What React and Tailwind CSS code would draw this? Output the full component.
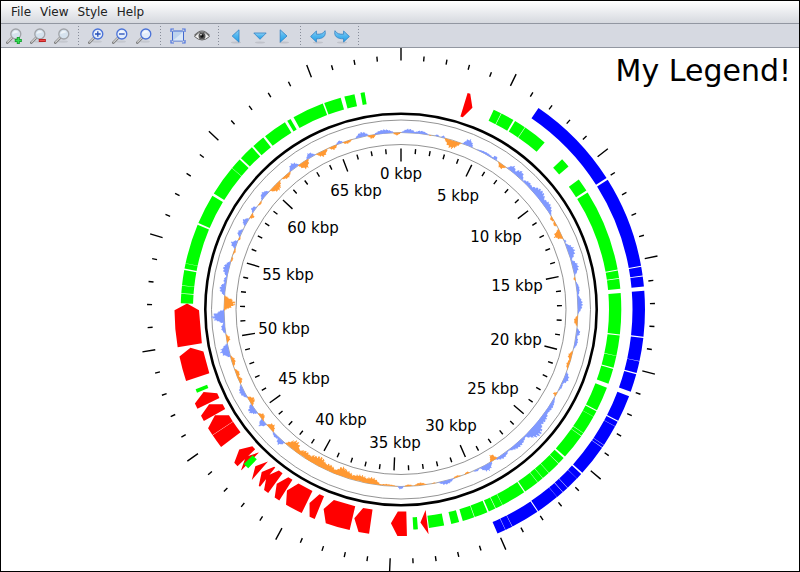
import React from 'react';

const RAD_PER_DEG = Math.PI / 180;
const DEG_PER_KBP = 5.214;

function pt(r, deg) {
  const a = deg * RAD_PER_DEG;
  return `${(r * Math.sin(a)).toFixed(2)} ${(-r * Math.cos(a)).toFixed(2)}`;
}

function band(r0, r1, a0, a1) {
  return `M${pt(r1, a0)}A${r1} ${r1} 0 0 1 ${pt(r1, a1)}L${pt(r0, a1)}A${r0} ${r0} 0 0 0 ${pt(r0, a0)}Z`;
}

const FORWARD = [
  [24.9, 27], [27.15, 30.7], [31.2, 34.2], [34.35, 40.7], [47, 49.5], [53.8, 57.3], [57.9, 79.55], [79.8, 81.8], [82, 84.6],
  [85.7, 96.5], [96.8, 102.1], [102.2, 105.3], [105.65, 109.7], [110.8, 117.2], [117.5, 119.05], [119.1, 124.1], [124.2, 125],
  [125.1, 131.9], [132.4, 134.3], [134.4, 137.8], [137.9, 139.9], [140, 141.6], [141.7, 145.7], [146, 152.5], [152.6, 154.5],
  [154.65, 156.5], [156.9, 160.45], [160.6, 163.7], [164.7, 166.8], [168.7, 172.7], [175.6, 176.8], [223.9, 225.5], [247.8, 248.8],
  [271.6, 274.1], [274.25, 276.2], [276.3, 280.3], [280.7, 282.05], [282.15, 292.6], [293.1, 301.1], [301.8, 309.85], [309.95, 312.9],
  [313.4, 317.4], [317.9, 321.3], [321.9, 328.2], [328.9, 329.9], [330.8, 339.2], [339.6, 344.1], [345.1, 347.8], [349.4, 350.5],
];

const OUTER = [
  [34.3, 57.4], [57.9, 79.7], [79.9, 82], [82.2, 84.6], [85.6, 96.4], [96.7, 102.2], [102.28, 105.1], [105.4, 109.7], [110.8, 117.1],
  [117.4, 118.6], [118.68, 123.7], [123.8, 124.4], [124.5, 132], [132.4, 133.8], [133.86, 136.9], [137, 138.4], [138.5, 140.2],
  [140.26, 145.75], [146, 152.8], [152.9, 154.6], [154.7, 156.7],
];

// base angle, shoulder angle, tip angle
const ARROWS = [
  [17.1, 17.8, 19.5], [173, 173, 174.8], [178.5, 180.9, 182.7], [188.1, 190.8, 192.6], [193.1, 199.4, 201.2], [202.4, 203.8, 205.3],
  [206, 210.5, 212.2], [212.5, 213.9, 215.5], [215.9, 217.2, 218.9], [218.5, 218.9, 220.6], [221.2, 221.2, 222.9], [224.8, 224.9, 226.5],
  [226.2, 227.4, 229.1], [236.35, 238.4, 240.4], [240.5, 242, 243.7], [244, 245.5, 247.3], [251.6, 258, 259.7], [260.4, 269.8, 271.6],
];

// start angle, end angle, peak height; positive values point outwards
const SKEW = [
  [0, 5, 4], [4, 9, 3], [9, 10, -1], [11, 12.5, 2], [13, 14.5, 2], [14.2, 20, -9], [20.3, 24, 7], [25, 32, 2], [31, 32.8, 4],
  [33.4, 36.5, -5], [36.8, 40, 6], [39, 43.5, 7], [43, 48, 4], [46, 54, 8], [51, 58, 6], [58, 60.2, -3], [60, 62, -3],
  [62.8, 66.5, -8], [66.7, 68, 2], [68, 74, 7], [73.5, 79, 6], [79.3, 80.7, -2], [80.8, 86, 3], [85, 91.5, 5], [91.8, 95.5, -4],
  [96, 99, 4], [98, 103, 3], [103.5, 107, -4], [106, 110, -3], [110.5, 115, 5], [114, 117.5, 2], [118, 119.3, -4], [119.5, 127, 4],
  [124, 132, 6], [128, 136, 11], [135, 143, 5], [142.5, 148, 4], [147, 149.7, -7], [149, 153.7, 7], [153.5, 156, 2], [157, 159, -2],
  [160, 163, -2], [162.5, 168, 4], [168.5, 170, -1], [171.5, 176, -3], [176, 179, -2], [179, 181.2, 3], [181, 188, -2],
  [186.5, 193, -7], [189, 198, -7], [194, 204, -8], [197.5, 202.5, -10], [201, 208, -7], [204.5, 212, -10], [207.5, 213, -8],
  [210, 217, -7], [215, 221, -10], [221, 224, 6], [223, 226.5, 3], [226, 229.5, -6], [229.3, 232, 7], [231, 234, -5],
  [234, 238, 7], [237, 240.5, -6], [240, 245, 5], [245, 248, -4], [247, 250.5, -4], [251, 255, -4], [254.3, 259, 9], [259, 262, -4],
  [262, 266, 4], [265.4, 270, 13], [269.7, 274.5, -12], [274.4, 279, 6], [278, 281, 3], [280.5, 286, 6], [285.5, 287.5, -2],
  [288, 290.5, -2], [290, 293, 6], [293, 294.5, -2], [294, 297, 4], [298, 301, 5], [301, 303, -4], [303, 305.5, 4], [306, 308, -2],
  [308, 312, 5], [312, 317, -7], [317.5, 321.5, -4], [321, 325, 6], [324.3, 328.5, -8], [327.7, 331, 5], [331.2, 335.5, -6],
  [335.8, 339, -4], [338.5, 341, 3], [340.5, 344, -3], [345, 349.7, 5], [349, 352, -4], [351, 358, 4], [357.3, 360, -3],
];

function lump([a0, a1, h], index) {
  const steps = Math.max(4, Math.round((a1 - a0) / 0.3));
  let d = `M${pt(177, a0)}`;
  for (let i = 0; i < steps; i += 1) {
    const t = (i + 0.5) / steps;
    const jitter = 0.87 + 0.13 * Math.sin(i * 2.1 + index * 2.3);
    const r = 177 + h * Math.sin(Math.PI * t) * jitter;
    d += `L${pt(r, a0 + ((a1 - a0) * i) / steps)}L${pt(r, a0 + ((a1 - a0) * (i + 1)) / steps)}`;
  }
  return `${d}L${pt(177, a1)}Z`;
}

function arrow([base, shoulder, tip]) {
  const side = shoulder > base + 3 ? `A226.5 226.5 0 0 1 ${pt(226.5, shoulder)}` : `L${pt(226.5, shoulder)}`;
  return `M${pt(202, base)}L${pt(226.5, base)}${side}L${pt(214, tip)}L${pt(202, shoulder)}Z`;
}

const LABELS = [
  ['0 kbp', 0, -131], ['5 kbp', 57, -109], ['10 kbp', 95, -68], ['15 kbp', 116, -19], ['20 kbp', 115, 35], ['25 kbp', 92, 84],
  ['30 kbp', 50, 121], ['35 kbp', -6, 138], ['40 kbp', -60, 115], ['45 kbp', -97, 74], ['50 kbp', -117, 24], ['55 kbp', -113, -30],
  ['60 kbp', -88, -77], ['65 kbp', -45, -114],
];

function GenomeMap() {
  const ticks = Array.from({ length: 69 }, (_, k) => {
    const major = k % 5 === 0;
    const a = k * DEG_PER_KBP;
    return `M${pt(161, a)}L${pt(major ? 148 : 156, a)}M${pt(249, a)}L${pt(major ? 262 : 254, a)}`;
  }).join('');
  return (
    <svg viewBox="1 48 798 523" className="block h-full w-full" role="img" aria-label="Circular genome map">
      <g transform="translate(401 309.5)">
        <circle r="195.7" fill="none" stroke="#000" strokeWidth="2.6" />
        <circle r="189.5" fill="none" stroke="#777" strokeWidth="0.8" />
        <circle r="165" fill="none" stroke="#777" strokeWidth="0.8" />
        <circle r="177" fill="none" stroke="#808080" strokeWidth="0.7" />
        {SKEW.map((s, i) => (
          <path key={i} d={lump(s, i)} fill={s[2] > 0 ? '#8099ff' : '#ff9933'} />
        ))}
        <path d={ticks} stroke="#000" strokeWidth="1.4" />
        <path d={OUTER.map(([a, b]) => band(231.5, 244, a, b)).join('')} fill="#00f" />
        <path d={ARROWS.map(arrow).join('')} fill="#f00" />
        <path d={band(202, 226.5, 232.6, 236.25)} fill="#f00" />
        <path d={FORWARD.map(([a, b]) => band(208, 220.3, a, b)).join('')} fill="#0f0" />
        {LABELS.map(([label, x, y]) => (
          <text key={label} x={x} y={y} textAnchor="middle" className="text-[15px]">{label}</text>
        ))}
      </g>
    </svg>
  );
}

function Lens({ tone = 'blue', sign }) {
  const blue = tone === 'blue';
  return (
    <svg viewBox="0 0 16 16" className="size-4">
      <ellipse cx="9" cy="13.6" rx="5" ry="1.2" fill="#000" opacity="0.08" />
      <path d="M1.3 14.7 6.3 9.7" stroke="#7d7d7d" strokeWidth="2.6" strokeLinecap="round" />
      <path d="M1.6 14.2 6 9.7" stroke="#d8d8d8" strokeWidth="1.1" strokeLinecap="round" />
      <circle cx="9.8" cy="6" r="5" fill={blue ? '#e2ecfa' : '#d5e2ee'} stroke={blue ? '#4a72d8' : '#a0a3a8'} strokeWidth="1.3" />
      <path d="M6.400 6a3.400 3.400 0 0 1 6.200-1.800Z" fill="#fff" opacity="0.6" />
      {blue && sign && <path d={sign === 'plus' ? 'M7 6h5.6M9.8 3.2v5.6' : 'M7 6h5.6'} stroke="#2850b8" strokeWidth="1.3" />}
      {!blue && sign === 'plus' && (
        <>
          <path d="M8.800 12.500h7M12.300 9v7" stroke="#129a2c" strokeWidth="3" />
          <path d="M9.500 12.500h5.600M12.300 9.700v5.600" stroke="#35dd55" strokeWidth="1.400" />
        </>
      )}
      {!blue && sign === 'minus' && (
        <>
          <path d="M8.800 12.500h7" stroke="#b01818" strokeWidth="3" />
          <path d="M9.500 12.500h5.600" stroke="#f04a4a" strokeWidth="1.400" />
        </>
      )}
    </svg>
  );
}

function Glyph({ children }) {
  return <svg viewBox="0 0 16 16" className="size-4">{children}</svg>;
}

function SkyArrow({ d, id }) {
  return (
    <Glyph>
      <defs>
        <linearGradient id={id} x1="0" y1="0" x2="0" y2="1">
          <stop offset="0" stopColor="#8fd0f4" />
          <stop offset="0.5" stopColor="#4db4ee" />
          <stop offset="1" stopColor="#1ea2ec" />
        </linearGradient>
      </defs>
      <ellipse cx="8" cy="14.5" rx="5" ry="1" fill="#000" opacity="0.1" />
      <path d={d} fill={`url(#${id})`} stroke="#2f80c4" strokeWidth="0.8" strokeLinejoin="round" />
    </Glyph>
  );
}

const TOOLS = [
  [
    ['Increase detail', <Lens tone="grey" sign="plus" />],
    ['Decrease detail', <Lens tone="grey" sign="minus" />],
    ['Reset detail', <Lens tone="grey" />],
  ],
  [
    ['Zoom in', <Lens sign="plus" />],
    ['Zoom out', <Lens sign="minus" />],
    ['Reset zoom', <Lens />],
  ],
  [
    ['Fit to window', (
      <Glyph>
        <rect x="2.5" y="3" width="11" height="10" rx="0.8" fill="#bdd3ee" stroke="#4169d0" />
        <path d="M3 12.500 13 4v8.500Z" fill="#dbe8f7" />
        <path d="M1 4V1h3M12 1h3v3M15 12v3h-3M4 15H1v-3" fill="none" stroke="#4a72e0" strokeWidth="1.2" />
      </Glyph>
    )],
    ['Show features', (
      <Glyph>
        <path d="M.5 8.500Q8-.5 15.500 8.500Q8 15.500.5 8.500Z" fill="#f2f2f2" stroke="#666" strokeWidth="1" />
        <path d="M.5 7.500Q8-1.500 15.500 7.500" fill="none" stroke="#666" strokeWidth="1.2" />
        <circle cx="8" cy="8" r="3.5" fill="#555" />
        <circle cx="8" cy="8" r="1.7" fill="#111" />
        <circle cx="7" cy="6.800" r=".8" fill="#fff" />
      </Glyph>
    )],
  ],
  [
    ['Rotate left', <SkyArrow id="sky-left" d="M11 1.800v12.400L4.200 8Z" />],
    ['Center', <SkyArrow id="sky-down" d="M1.800 5h12.400L8 11.300Z" />],
    ['Rotate right', <SkyArrow id="sky-right" d="M4.200 1.800v12.400L11 8Z" />],
  ],
  [
    ['Undo', <SkyArrow id="sky-undo" d="M.6 8.500 6.400 3v3.200c4 .3 7-.5 8.600-3.500 1.300 5.300-2 8.300-8.600 8.100V14Z" />],
    ['Redo', <SkyArrow id="sky-redo" d="M15.400 8.500 9.600 3v3.200c-4 .3-7-.5-8.600-3.500-1.300 5.300 2 8.300 8.600 8.100V14Z" />],
  ],
];

export default function App() {
  return (
    <div className="flex h-screen flex-col border border-black bg-white font-['DejaVu_Sans',sans-serif] text-black">
      <nav className="flex h-[23px] shrink-0 items-center gap-[9px] border-b border-[#9297a1] bg-linear-to-b from-white to-[#d6d9df] px-[10px] text-xs text-[#222]">
        {['File', 'View', 'Style', 'Help'].map((name) => (
          <button key={name} type="button">{name}</button>
        ))}
      </nav>
      <div role="toolbar" aria-label="View controls" className="flex h-6 shrink-0 items-center border-b border-[#9297a1] bg-[#d6d9e1] pl-[5px]">
        {TOOLS.map((group, i) => (
          <div key={i} className="mr-[9px] flex items-center gap-2">
            {group.map(([name, icon]) => (
              <button key={name} type="button" aria-label={name} className="flex size-4 items-center justify-center">{icon}</button>
            ))}
            <span className="h-[19px] w-px bg-[repeating-linear-gradient(to_bottom,#888d99_0_1px,transparent_1px_3px)]" />
          </div>
        ))}
      </div>
      <main className="relative min-h-0 flex-1 overflow-hidden">
        <GenomeMap />
        <h1 className="absolute top-1 right-2 text-[30px] leading-[38px]">My Legend!</h1>
      </main>
    </div>
  );
}
